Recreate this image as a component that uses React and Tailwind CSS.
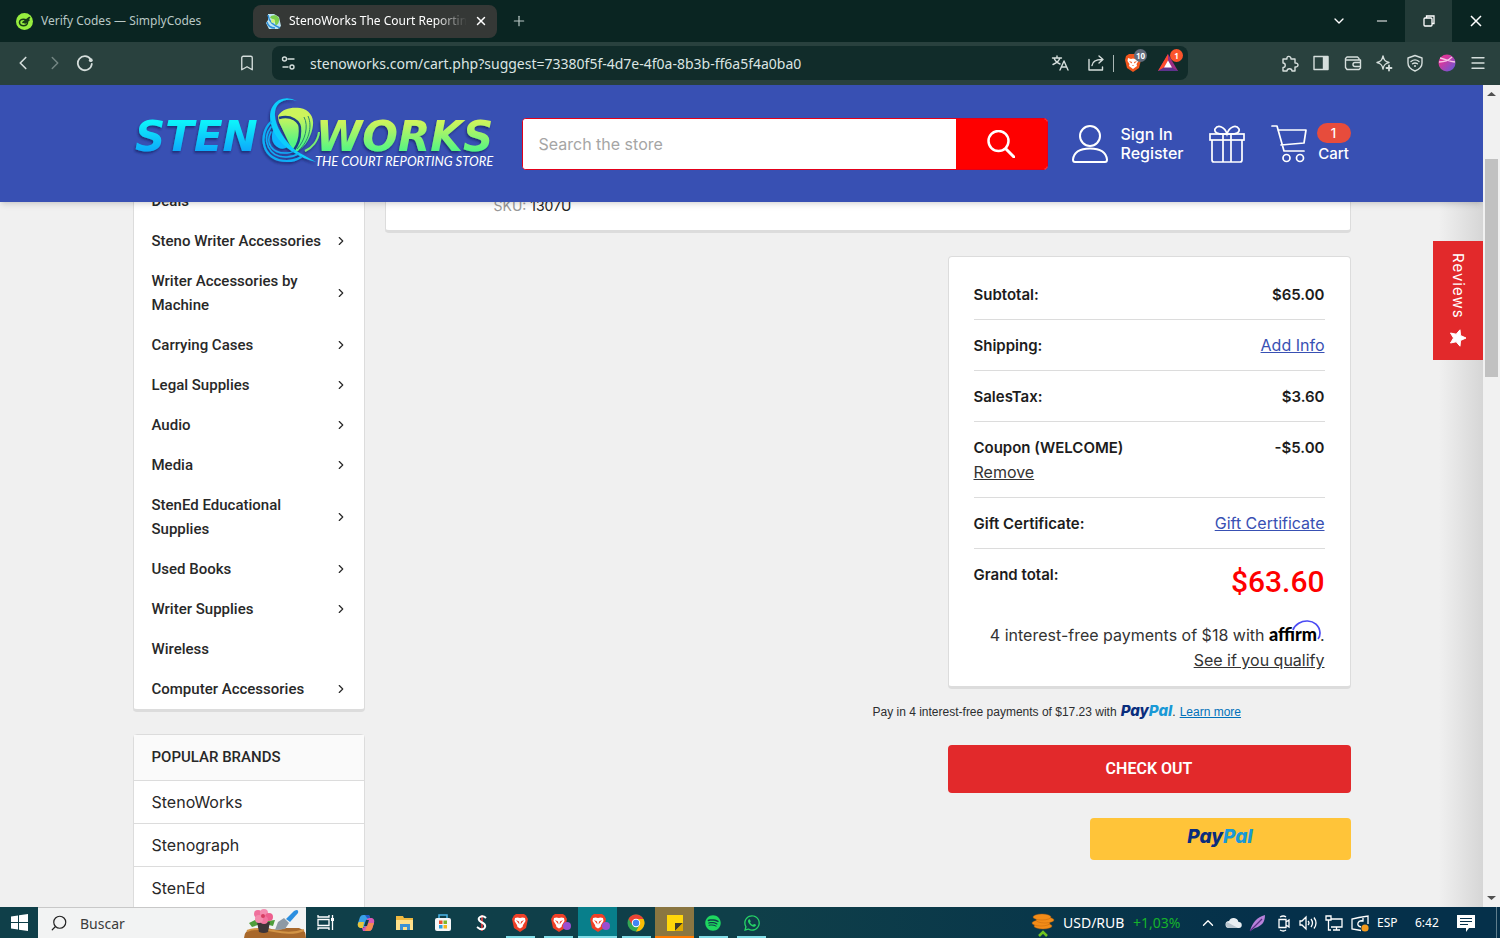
import React from "react";
import {
  Bookmark,
  ChevronDown,
  ChevronLeft,
  ChevronRight,
  ChevronUp,
  Menu,
  Minus,
  Plus,
  Search,
  X,
} from "lucide-react";
import { FaSpotify, FaWhatsapp } from "react-icons/fa6";

const categories = [
  { title: "Deals" },
  { title: "Steno Writer Accessories", more: true },
  { title: "Writer Accessories by Machine", more: true },
  { title: "Carrying Cases", more: true },
  { title: "Legal Supplies", more: true },
  { title: "Audio", more: true },
  { title: "Media", more: true },
  { title: "StenEd Educational Supplies", more: true },
  { title: "Used Books", more: true },
  { title: "Writer Supplies", more: true },
  { title: "Wireless" },
  { title: "Computer Accessories", more: true },
];

const brands = ["StenoWorks", "Stenograph", "StenEd"];

/* ---------- Browser chrome ---------- */

const SimplyCodesIcon = () => (
  <svg className="size-[17px] shrink-0" viewBox="0 0 17 17" fill="none">
    <circle cx="8.5" cy="8.5" r="8.5" fill="#97ee3f" />
    <ellipse cx="7.5" cy="9.500" rx="4" ry="3.200" stroke="#173a17" strokeWidth="1.600" />
    <path d="M7 9.500 13.500 4.500M9 10l4-3" stroke="#173a17" strokeWidth="1.600" strokeLinecap="round" />
  </svg>
);

const StenoIcon = () => (
  <svg className="size-[17px] shrink-0" viewBox="0 0 17 17" fill="none">
    <path d="M3 1h6l5 3 2 9-3 3H4l-3-6 2-3z" fill="#bfe6f2" />
    <path d="M6 3c5-2 9 1 8 5-.5 3-2 4-4 5C11 9 9 6 5 5z" fill="#7ccf4d" />
    <path d="M3 2c1 7 5 10 12 13M2 9c1 4 4 6 8 6" stroke="#2f8fd8" strokeWidth="1.500" />
    <circle cx="8" cy="8" r="2" fill="#d3f27d" />
  </svg>
);

const TabBar = () => (
  <div className="flex h-[42px] shrink-0 items-center bg-[#0a2522] text-[12px] text-[#b9c8c5]">
    <button className="ml-4 flex w-[237px] items-center gap-2">
      <SimplyCodesIcon />
      Verify Codes — SimplyCodes
    </button>
    <div className="flex h-[33px] w-[244px] items-center gap-[7px] rounded-lg bg-[#353836] pl-3 pr-2.5 text-white">
      <StenoIcon />
      <span className="flex-1 whitespace-nowrap [mask-image:linear-gradient(to_right,#000_82%,transparent)]">
        StenoWorks The Court Reportin
      </span>
      <button aria-label="Close tab">
        <X className="size-3.5" strokeWidth={2.5} />
      </button>
    </div>
    <button className="ml-3.5" aria-label="New tab">
      <Plus className="size-4" strokeWidth={1.8} />
    </button>
    <div className="ml-auto flex h-full text-white">
      <button className="flex w-10 items-center justify-center" aria-label="Search tabs">
        <ChevronDown className="size-4" />
      </button>
      <button className="flex w-[46px] items-center justify-center" aria-label="Minimize">
        <Minus className="size-4" strokeWidth={1.5} />
      </button>
      <button className="flex w-[47px] items-center justify-center bg-[#233b38]" aria-label="Restore">
        <svg className="size-3" viewBox="0 0 12 12" fill="none" stroke="currentColor" strokeWidth="1.3">
          <rect x="1" y="3" width="8" height="8" rx="1" />
          <path d="M3.500 3V1H11V8.500H9" />
        </svg>
      </button>
      <button className="flex w-12 items-center justify-center" aria-label="Close window">
        <svg className="size-3" viewBox="0 0 12 12" stroke="currentColor" strokeWidth="1.5">
          <path d="m1 1 10 10M11 1 1 11" />
        </svg>
      </button>
    </div>
  </div>
);

const Line = ({ children, label, className = "" }) => (
  <button aria-label={label} className={className}>
    <svg
      className="size-[18px]"
      viewBox="0 0 18 18"
      fill="none"
      stroke="currentColor"
      strokeWidth="1.4"
      strokeLinecap="round"
      strokeLinejoin="round"
    >
      {children}
    </svg>
  </button>
);

const Toolbar = () => (
  <div className="flex h-[43px] shrink-0 items-center bg-[#29413e] pb-px pl-3 pr-[13px] text-[#d5dedc]">
    <button aria-label="Back">
      <ChevronLeft className="size-[22px]" strokeWidth={1.8} />
    </button>
    <button className="ml-2.5 text-[#748683]" aria-label="Forward">
      <ChevronRight className="size-[22px]" strokeWidth={1.6} />
    </button>
    <Line label="Reload" className="ml-2.5">
      <path d="M14.600 5.200A7 7 0 1 0 15.800 10" strokeWidth="1.800" />
      <circle cx="14.800" cy="6.200" r="1.900" fill="currentColor" stroke="none" />
    </Line>
    <button className="ml-36" aria-label="Bookmark">
      <Bookmark className="size-[18px]" strokeWidth={1.8} />
    </button>
    <div className="ml-4 mr-[93px] flex h-[34px] flex-1 items-center rounded-lg bg-[#112c2a] px-2">
      <Line label="Site settings">
        <path d="M8 5h6M3 13h5" />
        <circle cx="4.500" cy="5" r="2" />
        <circle cx="12" cy="13" r="2" />
      </Line>
      <input
        aria-label="Address"
        className="ml-3 min-w-0 flex-1 bg-transparent text-[14px] text-[#dce5e3] outline-none"
        defaultValue="stenoworks.com/cart.php?suggest=73380f5f-4d7e-4f0a-8b3b-ff6a5f4a0ba0"
      />
      <Line label="Translate">
        <path d="M1.500 4h9M6 2v2M3 4c1 3 3.500 5 6 6M9 4c-1 3-3.500 5-7 6.500M9 16l4-9 4 9M10.500 13h5" />
      </Line>
      <Line label="Share" className="ml-[18px]">
        <path d="M2 5.500V16h13.500v-3M5 11.500C5.500 7.500 9 5.500 15 5.500M12 2l4 3.500L12 9" />
      </Line>
      <span className="ml-2 h-[17px] w-px bg-[#a9b7b5]" />
      <button className="relative ml-[10px]" aria-label="Brave Shields">
        <svg className="h-5 w-[18px]" viewBox="0 0 18 20">
          <path d="M5 1h8l3 2 1 4-2 8-6 4-6-4-2-8 1-4z" fill="#f1561d" />
          <path d="m4 5 3 1 2-.5L11 6l3-1 .5 3-2 3 .5 2-4 3-4-3 .5-2-2-3z" fill="#fff" />
          <path d="m5 8 3 1-.5 1.500zM13 8l-3 1 .5 1.500zM8 12h2l-1 1z" fill="#f1561d" />
        </svg>
        <span className="absolute -top-1 left-2.5 rounded-full bg-[#626b7b] px-0.5 text-[8px] font-bold leading-[13px] text-white">
          10
        </span>
      </button>
      <button className="relative ml-4 mr-0.5" aria-label="Brave Rewards">
        <svg className="size-5" viewBox="0 0 20 20">
          <path d="M10 1 20 18H0z" fill="#9c2d83" />
          <path d="M10 1 0 18l6-3.500 4-7z" fill="#ff4b2c" />
          <path d="M0 18h20l-6-3.500H6z" fill="#5d328d" />
          <path d="m10 7.500 4 7H6z" fill="#fff" />
        </svg>
        <span className="absolute -top-1 left-3 w-[13px] rounded-full bg-[#fb542b] text-center text-[8px] font-bold leading-[13px] text-white">
          1
        </span>
      </button>
    </div>
    <div className="flex w-[206px] items-center justify-between">
      <Line label="Extensions">
        <path d="M2 5h4c-1-3 4-4 4 0h4v4c4-.5 4 4.500 0 4v4h-3c0-3-5-3-5 0H2v-3.500c3 0 3-4.500 0-4.500z" />
      </Line>
      <Line label="Side panel">
        <rect x="2" y="2.500" width="14" height="13" />
        <path d="M11.500 3h4v12h-4z" fill="currentColor" />
      </Line>
      <Line label="Wallet">
        <path d="M15 6V4.500L13.500 3H3L1.500 4.500v9L3 15.500h12l1.500-1.500V6H2M16.500 8.500H11a2 2 0 0 0 0 4h5.500" />
      </Line>
      <Line label="Leo">
        <path d="M8 2c.8 4 2 5.500 6 6.500-4 1-5.200 2.500-6 6.500-.8-4-2-5.500-6-6.500C6 7.500 7.200 6 8 2z" />
        <path d="M14 11.500v5M11.500 14h5" strokeWidth="1.800" />
      </Line>
      <Line label="VPN">
        <path d="M9 1.500 16 4v5c0 4-3 6.500-7 8-4-1.500-7-4-7-8V4zM5 7.500c2.500-2 5.500-2 8 0M6.500 9.800c1.700-1.200 3.300-1.200 5 0" />
        <circle cx="9" cy="12" r="1" fill="currentColor" stroke="none" />
      </Line>
      <button aria-label="Profile">
        <svg className="size-[18px]" viewBox="0 0 18 18">
          <defs>
            <linearGradient id="avatar" x1="0" y1="0" x2="1" y2="1">
              <stop offset=".3" stopColor="#d9379b" />
              <stop offset="1" stopColor="#5b5be0" />
            </linearGradient>
          </defs>
          <circle cx="9" cy="9" r="8.500" fill="url(#avatar)" />
          <path d="M2 4c5 1 9 3 15 4M1 8c6 0 10-2 13-5" stroke="#f7c4e8" strokeWidth="1.300" fill="none" />
        </svg>
      </button>
      <button aria-label="Menu">
        <Menu className="size-[18px]" strokeWidth={1.8} />
      </button>
    </div>
  </div>
);

const Scrollbar = () => (
  <div className="flex w-[17px] shrink-0 flex-col items-center bg-[#f1f1f1]">
    <svg className="h-[17px] w-[9px]" viewBox="0 0 9 17">
      <path d="M0 11h9L4.500 7z" fill="#505050" />
    </svg>
    <div className="mt-[57px] h-[218px] w-[13px] bg-[#c1c1c1]" />
    <svg className="mt-auto h-[17px] w-[9px]" viewBox="0 0 9 17">
      <path d="M0 6h9l-4.500 4z" fill="#505050" />
    </svg>
  </div>
);

/* ---------- Store header ---------- */

const Logo = () => (
  <svg className="h-[99px] w-[363px] shrink-0" viewBox="133 94 363 99" role="img" aria-label="StenoWorks">
    <defs>
      <linearGradient id="sten" x1="0" y1="0" x2="0" y2="1">
        <stop offset="0.200" stopColor="#0bf3fb" />
        <stop offset="0.800" stopColor="#0ba9fb" />
      </linearGradient>
      <linearGradient id="works" x1="0" y1="0" x2="0" y2="1">
        <stop offset="0.200" stopColor="#cdf45c" />
        <stop offset="0.800" stopColor="#52f584" />
      </linearGradient>
      <filter id="drop" x="-5%" y="-10%" width="110%" height="130%">
        <feDropShadow dx="-1" dy="2" stdDeviation="1" floodColor="#16256c" floodOpacity=".8" />
      </filter>
    </defs>
    <g filter="url(#drop)">
      <g className="font-['DejaVu_Sans'] text-[42px] font-bold italic">
        <text x="135" y="151" fill="url(#sten)">STEN</text>
        <text x="316" y="151" fill="url(#works)">WORKS</text>
      </g>
      {/* green leaf with its ripple lines */}
      <path d="M278 116C283 108 292 107 300 108C309 109 314 117 313 125C312 135 306 147 296 152C293 150 291 147 289 143L279 122Z" fill="url(#works)" />
      <path d="M279 118C290 115 301 120 300 131C300 140 297 146 294 150" fill="none" stroke="#1c3f86" strokeWidth="2.500" />
      <path d="M304 117C309 126 305 141 297 149M308 116C313 127 308 142 299 150" fill="none" stroke="#2c8a6c" strokeWidth="1" />
      <path d="M305 151C312 148 318 141 319 132" fill="none" stroke="#7af072" strokeWidth="2" />
      {/* blue swirl */}
      <path d="M275 126C270 135 271 144 279 148Q284 150 289 146C283 141 278 135 275 126Z" fill="#0fb6ff" />
      <path d="M297 101C284 97 274 103 275 116C276 129 288 145 298 152L316 162C300 158 283 148 275 134C267 119 269 106 279 100Q288 96 297 101Z" fill="#0bcdfc" />
      <g fill="none" stroke="#10aef7" strokeLinecap="round">
        <path d="M271 122C258 134 261 161 287 161Q295 161 301 157" strokeWidth="2.200" />
        <path d="M271 127C261 140 269 158 287 157Q293 157 298 154" strokeWidth="1.600" />
        <path d="M271 132C265 143 272 154 287 153Q291 153 294 151" strokeWidth="1.400" />
      </g>
    </g>
    <text x="315" y="166" fill="#fff" className="font-['Lato'] text-[13px] italic">
      THE COURT REPORTING STORE
    </text>
  </svg>
);

const StoreHeader = () => (
  <header className="relative z-10 h-[117px] shrink-0 bg-[#3850b3] text-white shadow-md">
    <div className="mx-auto flex h-full w-[1218px] max-w-full items-center">
      <Logo />
      <form className="ml-[26px] flex h-[52px] flex-1 overflow-hidden rounded border border-[#e2001a] bg-white">
        <input
          aria-label="Search the store"
          placeholder="Search the store"
          className="min-w-0 flex-1 bg-white px-4 text-[16px] text-[#333] outline-none placeholder:text-[#a5a5a5]"
        />
        <button type="button" className="flex w-[91px] items-center justify-center bg-[#fe0000]" aria-label="Search">
          <svg className="size-7" viewBox="0 0 28 28" fill="none" stroke="#fff" strokeWidth="2.500" strokeLinecap="round">
            <circle cx="11.500" cy="11" r="10" />
            <path d="m19 19 8 8" strokeWidth="3" />
          </svg>
        </button>
      </form>
      <svg className="ml-6 h-[38px] w-9" viewBox="0 0 36 38" fill="none" stroke="#fff" strokeWidth="2">
        <circle cx="18" cy="11" r="10" />
        <path d="M1 34.500C2 26 9 23.500 18 23.500S34 26 35 34.500Q35 37 33 37H3Q1 37 1 34.500Z" />
      </svg>
      <div className="ml-[13px] flex w-16 flex-col text-[16px] font-medium leading-[19px]">
        <a href="#signin">Sign In</a>
        <a href="#register">Register</a>
      </div>
      <a href="#gifts" aria-label="Gift certificates" className="ml-6">
        <svg className="h-[38px] w-9" viewBox="0 0 36 38" fill="none" stroke="#fff" strokeWidth="1.700">
          <rect x="1" y="9" width="34" height="6" />
          <path d="M3 15v20q0 2 2 2h26q2 0 2-2V15M14 9v28M22 9v28M18 9C8 10 5 7 6 4C9-1 16 2 18 9C20 2 27-1 30 4C31 7 28 10 18 9" />
        </svg>
      </a>
      <a href="#cart" className="ml-[26px] flex items-center gap-2.5">
        <svg className="h-[38px] w-9" viewBox="0 0 36 38" fill="none" stroke="#fff" strokeWidth="1.700" strokeLinecap="round" strokeLinejoin="round">
          <path d="M1 1h5l7 25h20M7 5h28l-2 13-23 2" />
          <circle cx="15.500" cy="33" r="3.500" />
          <circle cx="29" cy="33" r="3.500" />
        </svg>
        <span className="flex flex-col items-center text-[15px] font-medium leading-[22px]">
          <span className="w-[34px] rounded-full bg-[#e74c3c] text-center text-[13px] leading-5">1</span>
          Cart
        </span>
      </a>
    </div>
  </header>
);

/* ---------- Cart page ---------- */

const Sidebar = () => (
  <aside className="w-[232px] shrink-0 text-[#282828]">
    <nav className="rounded-b border border-b-[3px] border-t-0 border-[#dcdcdc] bg-white font-['Roboto'] text-[15px] font-medium leading-6">
      {categories.map((item) => (
        <a key={item.title} href="#category" className="flex items-center justify-between py-2 pl-[18px] pr-4">
          <span className="max-w-[178px]">{item.title}</span>
          {item.more && <ChevronRight className="size-3.5 shrink-0" />}
        </a>
      ))}
    </nav>
    <nav className="mt-[22px] rounded-t border border-[#dcdcdc] bg-white text-[16px]">
      <h2 className="bg-[#fafafa] px-[18px] font-['Roboto'] text-[15px] font-medium leading-[45px]">
        POPULAR BRANDS
      </h2>
      {brands.map((brand) => (
        <a key={brand} href="#brand" className="block border-t border-[#dcdcdc] px-[18px] leading-[42px]">
          {brand}
        </a>
      ))}
    </nav>
  </aside>
);

const PayPalMark = ({ className }) => (
  <span className={`font-['Inter'] font-extrabold italic text-[#0a2d7d] ${className}`}>
    Pay<span className="text-[#1999d6]">Pal</span>
  </span>
);

const TotalRow = ({ label, children, extra }) => (
  <div className="border-b border-[#dcdcdc] pb-3 pt-[13px]">
    <div className="flex justify-between">
      <span className="text-[15px] font-semibold text-[#1c1c1c]">{label}</span>
      {children}
    </div>
    {extra}
  </div>
);

const Amount = ({ children }) => (
  <span className="text-[15px] font-semibold text-[#1c1c1c]">{children}</span>
);

const Totals = () => (
  <section className="mt-[23px] w-[403px] rounded border border-b-[3px] border-[#dcdcdc] bg-white px-[25px] pb-[13px] pt-3 text-[16px] leading-[25px] text-[#333]">
    <TotalRow label="Subtotal:">
      <Amount>$65.00</Amount>
    </TotalRow>
    <TotalRow label="Shipping:">
      <a href="#shipping" className="text-[#3850b3] underline">Add Info</a>
    </TotalRow>
    <TotalRow label="SalesTax:">
      <Amount>$3.60</Amount>
    </TotalRow>
    <TotalRow label="Coupon (WELCOME)" extra={<a href="#remove" className="underline">Remove</a>}>
      <Amount>-$5.00</Amount>
    </TotalRow>
    <TotalRow label="Gift Certificate:">
      <a href="#certificate" className="text-[#3850b3] underline">Gift Certificate</a>
    </TotalRow>
    <div className="flex justify-between pt-[13px]">
      <span className="text-[15px] font-semibold text-[#1c1c1c]">Grand total:</span>
      <span className="font-['Roboto'] text-[30px] font-medium leading-10 text-[#fe0000]">$63.60</span>
    </div>
    <p className="mt-5 text-right">
      4 interest-free payments of $18 with{" "}
      <span className="relative inline-block pr-[3px] font-['Lato'] text-[18px] font-black text-black">
        affirm
        <svg className="absolute -right-px -top-0.5 h-5 w-[29px]" viewBox="0 0 29 20" fill="none">
          <path d="M1 10C5-2 27-3 28 13Q28 17 26 19" stroke="#4a4af4" strokeWidth="1.700" />
        </svg>
      </span>
      .<br />
      <a href="#qualify" className="underline">See if you qualify</a>
    </p>
  </section>
);

const CartPage = () => (
  <main className="mx-auto -mt-[21px] flex w-[1218px] max-w-full items-start gap-5">
    <Sidebar />
    <div className="flex flex-1 flex-col items-end">
      <div className="w-full rounded-b border border-b-[3px] border-t-0 border-[#dcdcdc] bg-white pb-3 pl-[108px] pt-[13px] text-[14px] leading-6">
        <span className="text-[#999]">SKU:</span> <span className="text-[#222]">1307U</span>
      </div>
      <Totals />
      <p className="mt-[11px] flex w-[478px] items-center gap-1 font-['Liberation_Sans'] text-[12px] leading-[22px] text-[#2c2e2f]">
        Pay in 4 interest-free payments of $17.23 with
        <span>
          <PayPalMark className="text-[15px]" />.
        </span>
        <a href="#paypal" className="text-[#0070ba] underline">Learn more</a>
      </p>
      <button className="mt-[22px] h-12 w-[403px] rounded bg-[#e2292b] font-['Roboto'] text-[16px] font-semibold text-white">
        CHECK OUT
      </button>
      <button className="mt-[25px] flex h-[42px] w-[261px] justify-center rounded bg-[#ffc439]" aria-label="PayPal">
        <PayPalMark className="text-[19px] leading-[38px]" />
      </button>
    </div>
  </main>
);

const ReviewsTab = () => (
  <button className="absolute right-0 top-[156px] flex h-[119px] w-[50px] items-center bg-[#e2292b] text-white">
    <span className="flex h-full w-full items-center gap-2.5 pt-3 text-[15px] tracking-[1px] [writing-mode:vertical-rl]">
      Reviews
      <svg className="size-[18px]" viewBox="0 0 18 18">
        <path d="M17 9 11.500 6.500 11 .8 7.200 5.200 1.500 4 4.500 9 1.500 14l5.700-1.200L11 17.200l.5-5.700z" fill="#fff" stroke="#fff" strokeLinejoin="round" />
      </svg>
    </span>
  </button>
);

/* ---------- Taskbar ---------- */

const Brave = ({ dot }) => (
  <span className="relative">
    <svg className="h-[18px] w-4" viewBox="0 0 16 18">
      <path d="M4 0h8l2 1.500L16 5l-2 9-6 4-6-4L0 5l2-3.500z" fill="#ef3f26" />
      <path d="m3 4 2.500-.5L8 4l2.500-.5L13 4l.5 3-2.500 4-.5 2L8 14.500 5.500 13 5 11 2.500 7z" fill="#fff" />
      <path d="m4 6 3 1.500.5 3zM12 6 9 7.500l-.5 3z" fill="#ef3f26" />
    </svg>
    {dot && <span className="absolute -right-1 bottom-0.5 size-2 rounded-full bg-[#9b4fd0]" />}
  </span>
);

const tasks = [
  {
    name: "Copilot",
    icon: (
      <svg className="size-[18px]" viewBox="0 0 18 18">
        <path d="M6 1h6l1 3-3 1-2 8H3Q0 13 1 9L3 3Q4 1 6 1z" fill="#3aa0e8" />
        <path d="M2 8h5l-1 6H3Q0 13 1 9z" fill="#e8c53a" />
        <path d="M12 4h3q3 1 2 5l-2 6q-1 2-3 2H6l-1-3 3-1 2-8z" fill="#d659b4" />
        <path d="M11 9h6l-2 6q-1 2-3 2H8z" fill="#f58a52" />
        <path d="M8 1h4l1 3h-3z" fill="#2459c9" />
        <path d="m9 6 3 0-2 6H7z" fill="#0f3f49" />
      </svg>
    ),
  },
  {
    name: "Explorer",
    icon: (
      <svg className="size-[18px]" viewBox="0 0 18 18">
        <path d="M0 2h7l1 2h9v12H0z" fill="#eeb940" />
        <path d="M0 6h17v10H0z" fill="#ffe08a" />
        <path d="M4 16v-6h10v6h-3v-3H7v3z" fill="#3c91d4" />
      </svg>
    ),
  },
  {
    name: "Store",
    icon: (
      <svg className="size-[18px]" viewBox="0 0 18 18">
        <path d="M5 4V1h8v3" fill="none" stroke="#4cb6e8" strokeWidth="1.500" />
        <rect x="1" y="4" width="16" height="13" rx="2" fill="#f5f7f8" />
        <path d="M5 6.500h3.500V10H5z" fill="#e8512f" />
        <path d="M9.500 6.500H13V10H9.500z" fill="#7eb82c" />
        <path d="M5 11h3.500v3.500H5z" fill="#2b9fe0" />
        <path d="M9.500 11H13v3.500H9.500z" fill="#f5b81f" />
      </svg>
    ),
  },
  {
    name: "Salary",
    icon: (
      <svg className="size-[18px]" viewBox="0 0 18 18" fill="none">
        <path d="M9 1v16" stroke="#c23a3f" strokeWidth="2" />
        <path d="M13 4Q10 1 7 3T8 8q5 2 4 5t-5 2l-3-2" stroke="#fff" strokeWidth="2" />
      </svg>
    ),
  },
  { name: "Brave", icon: <Brave />, open: true },
  { name: "Brave profile", icon: <Brave dot />, open: true },
  { name: "Brave active", icon: <Brave dot />, open: true, tone: "bg-[#087f8b]" },
  {
    name: "Chrome",
    open: true,
    icon: (
      <svg className="size-[18px]" viewBox="0 0 18 18">
        <circle cx="9" cy="9" r="8.500" fill="#34a853" />
        <path d="M1.500 5A8.500 8.500 0 0 1 16.500 5H9z" fill="#ea4335" />
        <path d="M1.500 5 5.500 11 9 5z" fill="#ea4335" />
        <path d="M9 5h7.500A8.500 8.500 0 0 1 9 17.500l3.500-6.500z" fill="#fbbc05" />
        <circle cx="9" cy="9" r="4.200" fill="#fff" />
        <circle cx="9" cy="9" r="3.200" fill="#4285f4" />
      </svg>
    ),
  },
  {
    name: "Sticky Notes",
    open: true,
    tone: "bg-[#8a7641]",
    line: "bg-[#ff7a00]",
    icon: (
      <svg className="size-4" viewBox="0 0 16 16">
        <path d="M0 0h16v16H0z" fill="#ffd60a" />
        <path d="M8 8h8l-8 8z" fill="#3f3b2a" />
        <path d="M16 8v8H8z" fill="#e0aa00" />
      </svg>
    ),
  },
  { name: "Spotify", open: true, icon: <FaSpotify className="size-4 text-[#1ed760]" /> },
  { name: "WhatsApp", open: true, icon: <FaWhatsapp className="size-[18px] text-[#25d366]" /> },
];

const Tray = ({ children, label, className = "" }) => (
  <button aria-label={label} className={className}>
    <svg className="size-[18px]" viewBox="0 0 18 18" fill="none" stroke="#fff" strokeWidth="1.300">
      {children}
    </svg>
  </button>
);

const Taskbar = () => (
  <footer className="flex h-[31px] shrink-0 items-center bg-linear-to-r from-[#0f3f49] from-50% to-[#05304a] to-85% text-white">
    <button className="flex w-[38px] justify-center" aria-label="Start">
      <svg className="size-[17px]" viewBox="0 0 17 17" fill="#fff">
        <path d="M0 2.500 7 1.500V8H0zM8 1.300 17 0v8H8zM0 9h7v6.500l-7-1zM8 9h9v8l-9-1.300z" />
      </svg>
    </button>
    <label className="flex h-full w-[268px] items-center border-t border-[#c8c8c8] bg-[#f2f3f3] pl-3">
      <Search className="size-[18px] -scale-x-100 text-[#222]" strokeWidth={1.6} />
      <input
        aria-label="Buscar"
        placeholder="Buscar"
        className="ml-3 w-[164px] bg-transparent text-[14px] outline-none placeholder:text-[#3b3b3b]"
      />
      <svg className="h-[29px] w-[62px]" viewBox="0 0 62 29">
        <path d="M0 29Q0 21 9 20L24 19q8 3 18 0h13q7 2 7 10z" fill="#a8682b" />
        <path d="M3 22Q12 18 30 22T60 21" stroke="#d39445" strokeWidth="2" fill="none" />
        <path d="M13 10 5 14l3 4 9-3zM23 12l8-1-2 6-8-2z" fill="#4f9d3b" />
        <path d="M13 13h13l-2 10q-4 2-9 0z" fill="#3e3538" />
        <circle cx="14" cy="5" r="4" fill="#f0719c" />
        <circle cx="20" cy="4" r="4" fill="#f58cb0" />
        <circle cx="25" cy="8" r="4" fill="#ed5f8e" />
        <circle cx="20" cy="11" r="4" fill="#f2749f" />
        <circle cx="15" cy="10" r="4" fill="#f48cad" />
        <circle cx="19" cy="7" r="2" fill="#d63e62" />
        <path d="m34 13 6-4 5 5-4 6-10 1z" fill="#8e9aa5" />
        <path d="m42 10 8-8q5-3 4 2l-8 9z" fill="#2b8fe0" />
      </svg>
    </label>
    <button className="flex w-[38px] justify-center" aria-label="Task view">
      <svg className="size-[17px]" viewBox="0 0 17 17" fill="none" stroke="#fff" strokeWidth="1.300">
        <path d="M1 1v2h11V1M1 16v-2h11v2M1 5.500h11v6H1zM15.500 1v15" />
        <path d="M14 4h3v3h-3z" fill="#fff" stroke="none" />
      </svg>
    </button>
    <div className="ml-[3px] grid h-full w-[424px] grid-cols-11">
      {tasks.map((task) => (
        <button
          key={task.name}
          aria-label={task.name}
          className={`flex flex-col items-center ${task.tone || ""}`}
        >
          <span className="flex flex-1 items-center pt-0.5">{task.icon}</span>
          <span
            className={`h-0.5 ${task.tone ? "w-full" : "w-[29px]"} ${
              task.open ? task.line || "bg-[#82dde8]" : ""
            }`}
          />
        </button>
      ))}
    </div>
    <div className="ml-auto flex items-center">
      <svg className="mt-1 h-6 w-6" viewBox="0 0 24 24">
        <g fill="#f28c18" stroke="#b85d0b" strokeWidth=".4">
          <ellipse cx="12" cy="13" rx="9" ry="3" />
          <ellipse cx="10" cy="10" rx="9" ry="3" />
          <ellipse cx="14" cy="7" rx="9" ry="3" />
          <ellipse cx="11" cy="4" rx="9" ry="3" />
        </g>
        <path d="m8 23 4-4 4 4" stroke="#6fc421" strokeWidth="2.500" fill="none" />
      </svg>
      <span className="ml-2 w-[62px] text-[14px]">USD/RUB</span>
      <span className="ml-2 w-[56px] text-[14px] text-[#16b32b]">+1,03%</span>
      <button className="ml-2.5" aria-label="Hidden icons">
        <ChevronUp className="size-[18px]" strokeWidth={1.8} />
      </button>
      <Tray label="OneDrive" className="ml-2">
        <path d="M4 14a3.500 3.500 0 0 1 0-7 5 5 0 0 1 9.500 1 3 3 0 0 1 .5 6z" fill="#e8eef2" stroke="none" />
        <path d="M4 14a3.500 3.500 0 0 1-2-6l11 6z" fill="#b9c6cf" stroke="none" />
      </Tray>
      <Tray label="Feather" className="ml-1.5">
        <path d="M1 17C3 9 8 3 16 1c0 7-3 11-10 13z" fill="#b681da" stroke="none" />
        <path d="M1 17 13 5" stroke="#5b2e85" />
      </Tray>
      <Tray label="Camera" className="ml-2">
        <path d="M4 5.500h7v8H4zM11 8l3-2v7l-3-2M5 3q3.500-2 6 0M5 16q3.500 2 6 0" />
      </Tray>
      <Tray label="Volume" className="ml-1.5">
        <path d="M1 7v4h2l4 4V3L3 7zM9 7q2 2 0 4M12 5q3 4 0 8M15 3.500q4 5.500 0 11" />
      </Tray>
      <Tray label="Network" className="ml-2">
        <path d="M6 5h11v8H6M11.500 13v3M8 16h7M1 2h5v4H1zM3.500 6v10H6" />
      </Tray>
      <Tray label="Update" className="ml-2">
        <path d="M8 3.500 17 2v8M8 3.500 1 5v10l9 1.500M12 7q-4-1-5 2t3 4M12 4v3H9" />
        <circle cx="14" cy="14" r="3.600" fill="#f59a1c" stroke="none" />
      </Tray>
      <span className="ml-2 w-[38px] text-[12px]">ESP</span>
      <span className="w-[42px] text-[12px]">6:42</span>
      <button aria-label="Notifications">
        <svg className="size-[18px]" viewBox="0 0 18 18">
          <path d="M0 1h18v13h-6l-3 4v-4H0z" fill="#fff" />
          <path d="M3 4.500h12M3 7.500h12M3 10.500h8" stroke="#05304a" />
        </svg>
      </button>
      <span className="ml-[21px] mr-[3px] h-[31px] w-px bg-[#5f7d8c]" />
    </div>
  </footer>
);

const App = () => (
  <div className="flex h-screen flex-col overflow-hidden font-['Noto_Sans',sans-serif]">
    <TabBar />
    <Toolbar />
    <div className="flex min-h-0 flex-1 font-['Inter',sans-serif]">
      <div className="relative flex min-w-0 flex-1 flex-col overflow-hidden bg-[#f0f0f0]">
        <StoreHeader />
        <div className="absolute inset-y-0 right-0 w-11 bg-linear-to-r from-transparent to-[#d6d6d6]" />
        <CartPage />
        <ReviewsTab />
      </div>
      <Scrollbar />
    </div>
    <Taskbar />
  </div>
);

export default App;
